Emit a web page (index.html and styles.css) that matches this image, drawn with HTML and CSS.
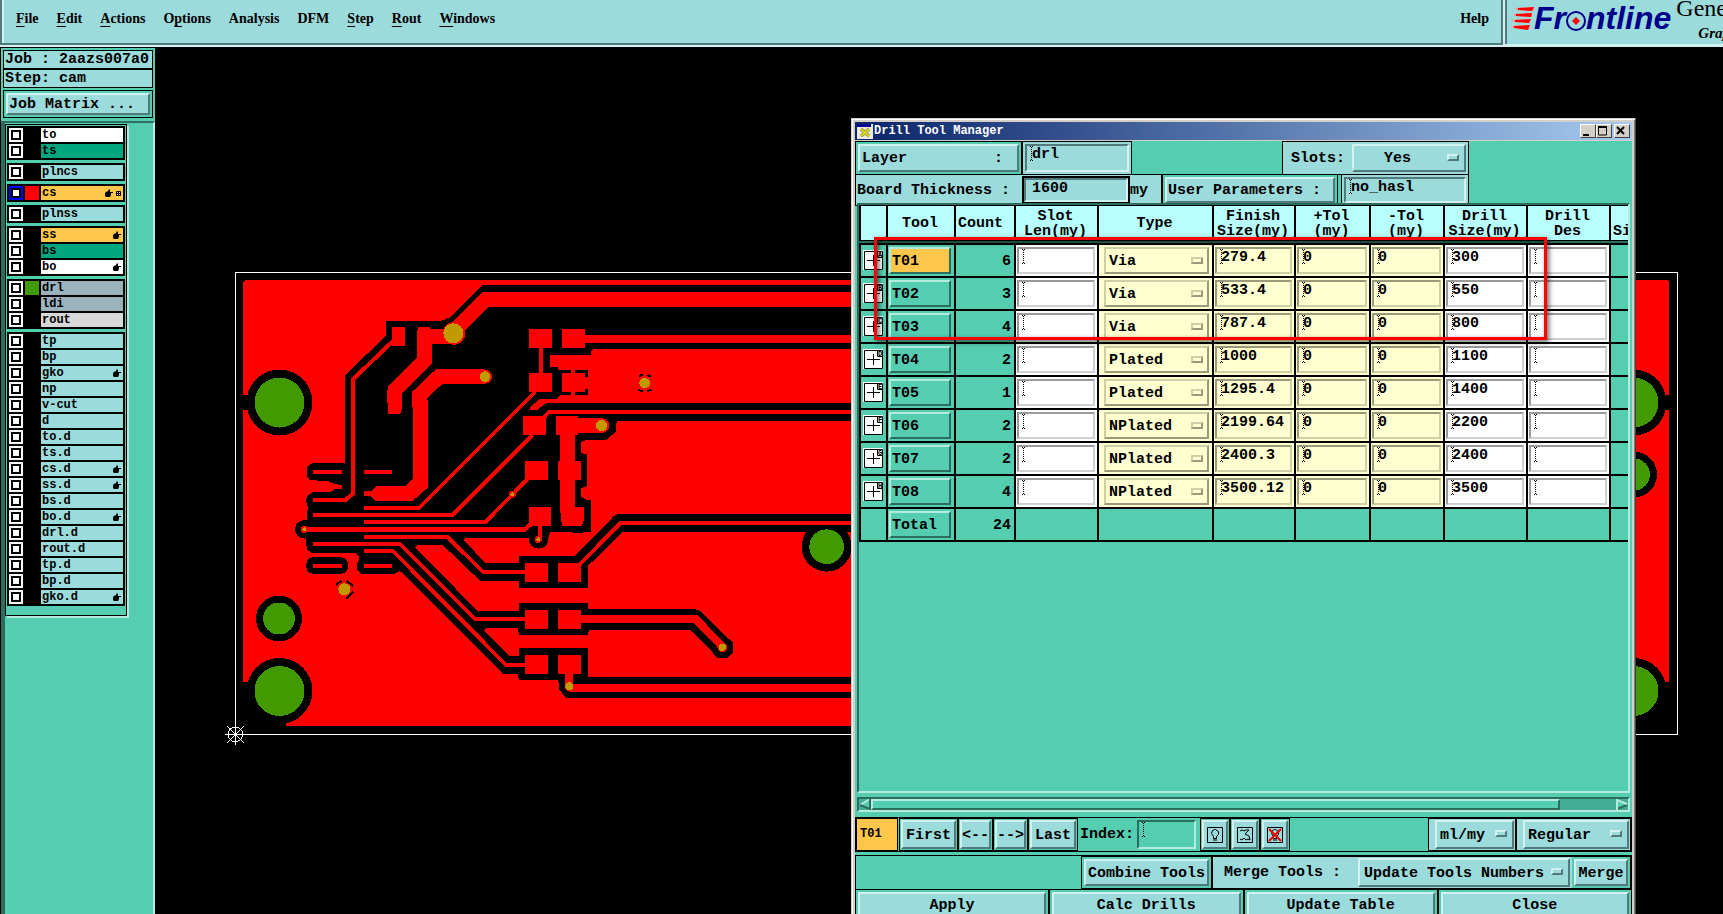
FILE: index.html
```html
<!DOCTYPE html>
<html lang="en">
<head>
<meta charset="utf-8">
<title>Drill Tool Manager</title>
<link rel="stylesheet" href="styles.css">
</head>
<body>
<header class="top">
  <nav class="menubar">
    <a href="#"><u>F</u>ile</a><a href="#"><u>E</u>dit</a><a href="#"><u>A</u>ctions</a><a href="#">O<u>p</u>tions</a><a href="#">Analysis</a><a href="#">DFM</a><a href="#"><u>S</u>tep</a><a href="#"><u>R</u>out</a><a href="#"><u>W</u>indows</a><a href="#" class="help">Help</a>
  </nav>
  <div class="brand">
    <svg class="streaks" width="24" height="24" viewBox="0 0 24 24"><g fill="#ff9a9a"><path d="M4 1 24 0V4L7 3zM2 7 22 6V10L5 9zM0 13 20 12V16L4 15zM0 19 19 18V22L3 21z"/></g><g fill="#f00"><path d="M8 1 24 0 22 4 8 3zM6 7 22 6 21 10 6 9zM5 13 21 12 19 16 5 15zM4 19 20 18 18 23 4 21z"/></g></svg>
    <span class="logo">Fr<svg width="20" height="20" viewBox="0 0 20 20"><circle cx="10" cy="10" r="9" fill="none" stroke="#00008b" stroke-width="2"/><path d="M10 6 14 10 10 14 6 10z" fill="#f00"/></svg>ntline</span>
    <span class="product"><span class="name">Gene</span><i>Grap</i></span>
  </div>
</header>
<main class="work">
  <aside class="side">
    <div class="job">
      <div class="info">Job : 2aazs007a0</div>
      <div class="info">Step: cam</div>
      <div class="cell matrix"><button class="btn">Job Matrix ...</button></div>
    </div>
    <div class="panel"><div class="layers" id="layers"></div></div>
  </aside>
  <section class="canvas">
    <svg class="board" width="1568" height="867" viewBox="155 47 1568 867" shape-rendering="crispEdges">
      <path fill="#f00" d="M245 280H1667L1669 282V682H1626V726H286V682H243V282z"/>
      <rect x="235.500" y="272.500" width="1442" height="462" fill="none" stroke="#fff"/>
      <path d="M243 395h10v15h-10zM1660 395h9v15h-9z"/>
      <g><circle cx="279.500" cy="402.500" r="33"/><circle cx="279" cy="618.500" r="23"/><circle cx="279.500" cy="691" r="33"/><circle cx="1633.500" cy="402.500" r="33"/><circle cx="1634" cy="474.500" r="23"/><circle cx="1633.500" cy="691" r="33"/></g>
      <g fill="#439a00"><circle cx="279.500" cy="402.500" r="25"/><circle cx="279" cy="618.500" r="16"/><circle cx="279.500" cy="691" r="25"/><circle cx="1633.500" cy="402.500" r="25"/><circle cx="1634" cy="474.500" r="16"/><circle cx="1633.500" cy="691" r="25"/></g>
      <g transform="translate(220 260) scale(.33333)">
        <path d="M1900 75H788L690 172 660 184H498V226L376 346V609H278L262 620 260 645 268 660 325 664 345 672 366 676V686L343 688 333 695 278 697 262 708 258 722 264 745 260 765 258 850 262 870 275 879H405L417 890V900L410 912 412 930 425 941H525L538 934 546 936 848 1241H893L897 1260H1012L1018 1268V1290L1038 1313H1900V1251H1104V1164H897V1188H867L792 1110 800 1103H893L897 1125H1104L1107 1110H1413L1478 1177 1480 1182 1493 1194H1524L1538 1180V1145L1525 1136 1440 1052 1427 1048H1104V1030H897V1053H773L585 862 592 855H668L780 962H897V983H1104V918L1208 815H1900V762H1195L1182 768 1065 888H897V909H797L730 840 738 834H985L990 816H1055L1060 819H1090V816H1113V720H1101L1084 712V685L1101 678V582L1084 580V546L1098 540H1160L1187 515 1190 483H1900V430H978L953 449H930V442L958 418 1012 416 1020 405H1104V330H1015V321H990V285H1113V273L1120 267H1900z"/>
        <circle cx="253" cy="808" r="28"/><circle cx="956" cy="836" r="30"/><circle cx="1820" cy="860" r="75"/>
        <rect x="259" y="892" width="125" height="49" rx="20"/>
        <g fill="#f00">
          <path d="M516 201h39v57h-39zM594 201H630V207H700V252H636V312L546 400V447L540 462H504L501 395 505 380 591 293V220zM927 207h69v57h-69zM1026 207h69v57h-69zM957 264h12v75h-12zM927 339h69v57h-69zM1026 339h69v57h-69zM1053 325h12v85h-12zM1090 351h20v36h-20zM909 468h69v57h-69zM1008 468H1074V474H1145V519H1074V525H1065V603H1084V660H1065V741H1092V780L1086 798H1026L1020 745V660H1014V603H1020V525H1008zM915 603h69v57h-69zM927 741h66v57h-66zM953 798h12v40h-12zM915 909h69v57h-69zM1014 909h69v57h-69zM915 1050h69v57h-69zM1014 1050h69v57h-69zM915 1185h69v57h-69zM1014 1185h69v57h-69zM1035 1242h24v37h-24z"/>
          <path d="M432 694H455L470 678H557L580 655V420H624V682L578 723H465L452 707H432z"/>
          <circle cx="702" cy="220" r="34"/><circle cx="795" cy="350" r="21"/><circle cx="1146" cy="497" r="22"/><circle cx="877" cy="703" r="11"/><circle cx="253" cy="808" r="11"/><circle cx="955" cy="838" r="11"/><circle cx="1507" cy="1162" r="15"/><circle cx="1048" cy="1280" r="14"/>
        </g>
        <g fill="none" stroke="#f00" stroke-width="12">
          <path stroke-width="45" d="M1900 118H797L700 215M795 350H657L599 405V440"/>
          <path stroke-width="24" d="M1095 237H1900M1083 1077H1427L1507 1160M1048 1284H1900"/>
          <path d="M520 242 400 357V700L375 721H280M278 636H366M432 636H516M432 744H597L945 396M278 765H698L938 525M432 787H795L922 658M432 831H683L788 935H915M278 852H540L765 1077H915M432 874H520L858 1215H915M278 917H366M432 917H516M1900 456H987L970 474M1078 914 1202 789H1900"/>
          <path stroke-width="14" d="M253 808H915L935 790"/>
        </g>
        <g fill="none" stroke="#000" stroke-width="6"><path d="M348 975 364 962M380 962 399 978M400 995 378 1016M1256 348 1268 345M1282 345 1294 350M1256 390 1268 394M1282 394 1294 389"/></g>
        <g fill="#c19a00"><circle cx="700" cy="220" r="30"/><circle cx="795" cy="350" r="16"/><circle cx="1145" cy="497" r="17"/><circle cx="877" cy="703" r="6"/><circle cx="253" cy="808" r="6"/><circle cx="955" cy="838" r="6"/><circle cx="1507" cy="1162" r="11"/><circle cx="1048" cy="1279" r="12"/><circle cx="373" cy="988" r="18"/><circle cx="1274" cy="369" r="16"/></g>
        <circle cx="1820" cy="860" r="52" fill="#439a00"/>
        <g fill="none" stroke="#fff" stroke-width="3"><circle cx="46" cy="1423" r="22"/><path d="M15 1423H77M46 1392V1455M22 1399 71 1448M71 1399 22 1448"/></g>
      </g>
    </svg>

    <div class="dialog" role="dialog" aria-label="Drill Tool Manager">
      <div class="title">
        <svg width="16" height="15" viewBox="0 0 16 15"><path fill="#ece9d8" d="M0 0h16v15H0z"/><path fill="#00008b" d="M0 0h14v3H0z"/><path d="M4 5 12 12M12 5 4 12" stroke="#777" stroke-width="3"/><path d="M4 5 12 12M12 5 4 12" stroke="#dcdc00" stroke-width="2"/></svg>
        <span>Drill Tool Manager</span>
        <button aria-label="Minimize"><svg width="12" height="10" viewBox="0 0 12 10"><path d="M2 8h6v2H2z"/></svg></button>
        <button aria-label="Maximize"><svg width="12" height="10" viewBox="0 0 12 10"><path d="M1.500 1h8v8h-8z" fill="none" stroke="#000"/><path d="M1 0h9v2H1z"/></svg></button>
        <button aria-label="Close window" class="x"><svg width="12" height="10" viewBox="0 0 12 10"><path d="M2 1 9 8M9 1 2 8" stroke="#000" stroke-width="2"/></svg></button>
      </div>
      <div class="content">
        <div class="row1">
          <div class="cell"><button class="btn split"><span>Layer</span><span>:</span></button></div>
          <div class="cell aqua"><input class="field beam" aria-label="Layer" value="drl"></div>
          <div></div>
          <div class="cell aqua slots"><label for="slots">Slots:</label><span class="menu"><select id="slots" class="btn yes"><option>Yes</option></select></span></div>
        </div>
        <div class="row2">
          <div class="cell aqua thick"><label for="bt">Board Thickness :</label><input id="bt" class="field focus" value="1600"><span>my</span></div>
          <div class="cell"><button class="btn params">User Parameters :</button></div>
          <div></div>
          <div class="cell aqua"><input class="field beam" aria-label="User Parameters" value="no_hasl"></div>
        </div>
        <div class="frame">
          <table>
            <colgroup><col class="c0"><col class="c1"><col class="c2"><col class="c3"><col class="c4"><col class="c5"><col class="c6"><col class="c7"><col class="c3"><col class="c3"><col></colgroup>
            <thead>
              <tr><th></th><th>Tool</th><th class="count">Count</th><th>Slot<br>Len(my)</th><th>Type</th><th>Finish<br>Size(my)</th><th>+Tol<br>(my)</th><th>-Tol<br>(my)</th><th>Drill<br>Size(my)</th><th>Drill<br>Des</th><th class="cut"><br>Si</th></tr>
              <tr class="gap"><td colspan="11"></td></tr>
            </thead>
            <tbody id="tools"></tbody>
          </table>
          <div class="mark"></div>
        </div>
        <div class="scroll">
          <button aria-label="Scroll left"><svg width="12" height="11" viewBox="0 0 12 11"><path d="M11 0 1 6 11 11z" fill="#55cdb0"/><path d="M11 0 1 6" stroke="#b5ebdd" stroke-width="2"/><path d="M1 6 11 10V0" fill="none" stroke="#2c6e5e" stroke-width="2"/></svg></button>
          <div class="thumb"></div>
          <button aria-label="Scroll right"><svg width="12" height="11" viewBox="0 0 12 11"><path d="M1 0 11 6 1 11z" fill="#55cdb0"/><path d="M11 6 1 10" stroke="#2c6e5e" stroke-width="2"/><path d="M1 11V1L11 5" fill="none" stroke="#b5ebdd" stroke-width="2"/></svg></button>
        </div>
        <div class="nav">
          <div class="current">T01</div>
          <div class="cell first"><button class="btn">First</button></div>
          <div class="cell arrow"><button class="btn">&lt;--</button></div>
          <div class="cell arrow"><button class="btn">--&gt;</button></div>
          <div class="cell last"><button class="btn">Last</button></div>
          <label for="index">Index:</label><input id="index" class="field beam index">
          <div class="cell ico"><button class="btn" aria-label="Highlight"><svg width="16" height="16" viewBox="0 0 16 16"><g fill="none" stroke="#000"><path d="M.5.5h15v15H.5z"/><path d="M6.500 11.500V9.500L4.500 6.500 5.500 3.500 7.500 2.500H8.500L11.500 4.500V7.500L9.500 9.500V11.500z"/><path d="M6 13h4"/></g></svg></button></div>
          <div class="cell ico"><button class="btn" aria-label="Select"><svg width="16" height="16" viewBox="0 0 16 16"><g fill="none" stroke="#000"><path d="M.5.5h15v15H.5z"/><path d="M3 4 5 3 7 4 9 3 12 3 8 7 12 9 13 13 11 12 9 13 7 11 5 13 3 12"/></g></svg></button></div>
          <div class="cell ico"><button class="btn" aria-label="Clear"><svg width="16" height="16" viewBox="0 0 16 16"><g fill="none" stroke="#000"><path d="M.5.5h15v15H.5z"/><path d="M6.500 11.500V9.500L4.500 6.500 5.500 3.500 7.500 2.500H8.500L11.500 4.500V7.500L9.500 9.500V11.500z"/><path d="M6 13h4"/></g><path d="M2 2 14 14M14 2 2 14" stroke="#e00" stroke-width="2"/></svg></button></div>
          <div class="space"></div>
          <div class="cell aqua units"><span class="menu"><select class="btn" aria-label="Units"><option>ml/my</option></select></span></div>
          <div class="cell aqua mode"><span class="menu"><select class="btn" aria-label="Mode"><option>Regular</option></select></span></div>
        </div>
        <div class="merge">
          <div class="space"></div>
          <div class="cell combine"><button class="btn">Combine Tools</button></div>
          <div class="cell aqua opts"><label for="upd">Merge Tools :</label><span class="menu"><select id="upd" class="btn"><option>Update Tools Numbers</option></select></span></div>
          <div class="cell go"><button class="btn">Merge</button></div>
        </div>
        <div class="actions">
          <div class="cell"><button class="btn">Apply</button></div>
          <div class="cell"><button class="btn">Calc Drills</button></div>
          <div class="cell"><button class="btn">Update Table</button></div>
          <div class="cell"><button class="btn">Close</button></div>
        </div>
      </div>
    </div>
  </section>
</main>
<script src="app.js"></script>
</body>
</html>
```
FILE: styles.css
```css
*, *::after { box-sizing: border-box; }
:root {
  --green: #55cdb0;
  --green-dark: #2c6e5e;
  --green-light: #b5ebdd;
  --aqua: #9bdbdb;
  --aqua-dark: #527a7c;
  --aqua-light: #d3f1f0;
  --orange: #ffc64c;
}
html, body { height: 100%; }
body {
  margin: 0;
  display: flex;
  flex-direction: column;
  overflow: hidden;
  background: #000;
  color: #000;
  font: bold 15px/17px "Liberation Mono", monospace;
}
button, input, select { font: inherit; color: inherit; margin: 0; padding: 0; border-radius: 0; }
svg { display: block; }

/* top bar */
.top { display: flex; flex: none; height: 47px; background: var(--aqua-light); overflow: hidden; }
.menubar {
  flex: 1;
  display: flex;
  gap: 18px;
  padding: 10px 12px 0 14px;
  height: 45px;
  background: var(--aqua);
  border: solid var(--aqua-dark);
  border-width: 0 2px 2px;
  box-shadow: inset 2px 0 var(--aqua-light);
  font: bold 14px/18px "Liberation Serif", serif;
}
.menubar a { color: #000; text-decoration: none; }
.menubar u { text-underline-offset: 3px; }
.help { margin-left: auto; }
.brand {
  flex: none;
  display: flex;
  width: 218px;
  height: 44px;
  margin-left: 2px;
  padding: 0 0 0 3px;
  background: var(--aqua);
  border-left: 2px solid var(--aqua-dark);
}
.streaks { flex: none; margin: 7px 0 0 0; }
.logo { display: flex; align-items: flex-start; flex: none; color: #00008b; font: italic bold 32px/36px "Liberation Sans", sans-serif; }
.logo svg { margin-top: 11px; }
.product { display: flex; flex-direction: column; margin-left: 5px; font-family: "Liberation Serif", serif; font-weight: normal; }
.name { font-size: 24px; line-height: 16px; }
.product i { margin: 9px 0 0 22px; font-size: 15px; line-height: 16px; font-weight: bold; }

.work { flex: 1; display: flex; min-height: 0; }

/* layer list */
.side { flex: none; width: 155px; display: flex; flex-direction: column; border-left: 1px solid #000; background: var(--green); }
.job { padding: 2px 2px 3px; border-top: 1px solid #000; }
.info { height: 19px; padding: 0 1px; background: var(--aqua); border: 1px solid #000; line-height: 17px; white-space: nowrap; }
.matrix { margin-top: 2px; height: 28px; }
.matrix .btn { text-align: left; padding: 0 1px; }
.panel { flex: 1; padding-top: 1px; border: solid; border-width: 2px 2px 0 4px; border-color: var(--green-dark) var(--green-light) transparent var(--green-dark); }
.layers {
  display: flex;
  flex-direction: column;
  gap: 3px;
  width: 122px;
  padding: 1px 1px 9px;
  border: 1px solid #000;
  box-shadow: 2px 2px var(--green-light);
  font-size: 12px;
  line-height: 14px;
}
.group { display: flex; flex-direction: column; gap: 2px; padding: 2px; background: #000; }
.layer { display: grid; grid-template-columns: 14px 14px 1fr; gap: 2px; height: 14px; }
.layer input { appearance: none; width: 14px; height: 14px; background: #fff; border: 2px solid #fff; box-shadow: inset 0 0 0 2px #000; }
.layer input.active { border-color: #00f; }
.layer label { display: flex; align-items: center; gap: 3px; padding: 0 2px 0 1px; background: var(--aqua); }
.layer label span { flex: 1; }
.swatch.red { background: #f00; }
.swatch.green { background: #439a00; }
.layer .white { background: #fff; }
.layer .mask { background: #00a67d; }
.layer .orange { background: var(--orange); }
.layer .slate { background: #9bb2bd; }
.layer .grey { background: #d8d8d8; }

/* board and dialog */
.canvas { flex: 1; position: relative; overflow: hidden; min-width: 0; }
.dialog {
  position: absolute;
  left: 696px;
  top: 71px;
  width: 785px;
  border: 1px solid;
  border-color: #d4d0c8 #404040 #404040 #d4d0c8;
  box-shadow: inset 1px 1px #fff, inset -1px -1px #808080;
  background: #d4d0c8;
  padding: 3px 3px 0;
}
.title { display: flex; align-items: center; height: 18px; padding: 0 2px; background: linear-gradient(90deg, #0a246a, #a6caf0); color: #fff; font-size: 12px; }
.title span { flex: 1; margin-left: 1px; }
.title button { width: 16px; height: 14px; border: 1px solid; border-color: #fff #404040 #404040 #fff; background: #d4d0c8; }
.title .x { margin-left: 2px; }
.content { margin-top: 1px; background: var(--green); }

.cell { display: flex; padding: 2px; border: 1px solid #000; background: var(--green); min-width: 0; }
.aqua { background: var(--aqua); }
.btn {
  flex: 1;
  display: block;
  width: 100%;
  padding-top: 1px;
  background: var(--aqua);
  border: 2px solid;
  border-color: var(--aqua-light) var(--aqua-dark) var(--aqua-dark) var(--aqua-light);
  white-space: nowrap;
  min-width: 0;
}
select.btn { appearance: none; height: 100%; padding-left: 4px; }
.menu { flex: 1; display: flex; position: relative; min-width: 0; }
.menu::after {
  content: "";
  position: absolute;
  right: 7px;
  top: 10px;
  width: 12px;
  height: 7px;
  border: 2px solid;
  border-color: var(--aqua-light) var(--aqua-dark) var(--aqua-dark) var(--aqua-light);
  pointer-events: none;
}
.field {
  flex: 1;
  min-width: 0;
  width: 100%;
  padding: 0 0 7px 5px;
  background-color: transparent;
  border: 2px solid;
  border-color: var(--aqua-dark) var(--aqua-light) var(--aqua-light) var(--aqua-dark);
  outline: none;
}
.beam {
  background-repeat: no-repeat;
  background-image:
    repeating-linear-gradient(#000 0 1px, transparent 1px 2px),
    repeating-linear-gradient(90deg, #000 0 1px, transparent 1px 2px),
    repeating-linear-gradient(90deg, #000 0 1px, transparent 1px 2px);
  background-size: 1px 13px, 3px 1px, 3px 1px;
  background-position: 4px 1px, 3px 0, 3px 14px;
}

.row1 { display: grid; grid-template-columns: 167px 110px 1fr 187px 163px; height: 33px; }
.split { display: flex; justify-content: space-between; padding: 4px 14px 0 2px; }
.slots { align-items: center; padding-left: 8px; }
.slots .menu { align-self: stretch; margin-left: 7px; }
.slots .yes { padding-left: 30px; }
.row2 { display: grid; grid-template-columns: 307px 176px 3px 128px 1fr; height: 29px; }
.row2 .field { padding-bottom: 5px; }
.row2 .params { text-align: left; padding-left: 1px; }
.thick { align-items: center; padding: 0 0 0 1px; }
.thick label { width: 167px; }
.thick .focus { flex: none; width: 104px; height: 24px; padding-bottom: 4px; padding-left: 6px; box-shadow: 0 0 0 2px #000; }
.thick span { margin-left: 2px; }

/* tool table */
.frame { position: relative; height: 590px; margin: 0 2px; border: 2px solid; border-color: var(--green-dark) var(--green-light) var(--green-light) var(--green-dark); }
table { width: 100%; table-layout: fixed; border-collapse: separate; border-spacing: 0; }
.c0 { width: 27px; }
.c1 { width: 68px; }
.c2 { width: 60px; }
.c3 { width: 83px; }
.c4 { width: 115px; }
.c5 { width: 82px; }
.c6 { width: 75px; }
.c7 { width: 74px; }
th { height: 36px; padding: 1px 2px 0 0; background: #b8ffff; border: solid #000; border-width: 1px 0 1px 2px; line-height: 15px; overflow: hidden; }
th.count { text-align: left; padding-left: 2px; }
th.cut { text-align: left; padding: 1px 0 0 2px; white-space: nowrap; }
td { height: 33px; padding: 2px 3px 2px 1px; border: solid #000; border-width: 2px 0 0 2px; vertical-align: middle; }
tbody tr:last-child td { height: 35px; border-bottom-width: 2px; }
.gap td { height: 2px; padding: 0; border: 0; background: var(--green-dark); }
td.num { text-align: right; padding-top: 3px; }
td.white, td.yellow { padding-right: 2px; }
td.white { background: #fff; }
td.yellow { background: #ffffcf; }
td .btn, td .field { height: 27px; }
td .btn { text-align: left; padding: 1px 1px 0; background: transparent; border-color: var(--green-light) var(--green-dark) var(--green-dark) var(--green-light); }
td .btn.on { background: var(--orange); }
td.type { padding-left: 5px; padding-right: 3px; }
td .menu .btn { border-color: #cfcfa6 #9a9a7a #9a9a7a #cfcfa6; padding-left: 3px; }
td .menu::after { border-color: #cfcfa6 #9a9a7a #9a9a7a #cfcfa6; right: 6px; }
td .field { display: block; padding-left: 4px; }
td.yellow .field { border-color: #9a9a7a #cfcfa6 #cfcfa6 #9a9a7a; }
td.white .field { border-color: #9a9a9a #cfcfcf #cfcfcf #9a9a9a; }
td.sym { padding: 0 0 1px 2px; }
.mark { position: absolute; left: 15px; top: 32px; width: 673px; height: 103px; border: 3px solid #f00; box-shadow: 2px 2px 5px rgba(0,0,0,.6), inset 2px 2px 5px rgba(0,0,0,.6); pointer-events: none; }

.scroll { display: flex; height: 15px; margin: 4px 2px 5px; background: #45ad93; border: 2px solid; border-color: var(--green-dark) var(--green-light) var(--green-light) var(--green-dark); }
.scroll button { width: 12px; border: 0; background: none; }
.thumb { flex: 1; margin-right: 56px; background: var(--green); border: 2px solid; border-color: var(--green-light) var(--green-dark) var(--green-dark) var(--green-light); }

.nav { display: flex; height: 35px; border: 1px solid #000; }
.nav .cell { padding: 1px; }
.current { width: 42px; margin-right: 1px; padding-left: 3px; background: var(--orange); border: 1px solid #000; font-size: 12px; line-height: 31px; }
.first { width: 59px; }
.arrow { width: 35px; }
.last { width: 50px; }
.nav label { margin-left: 2px; line-height: 33px; }
.nav .index { flex: none; width: 59px; height: 29px; margin: 2px 4px 2px 3px; border-color: var(--green-dark) var(--green-light) var(--green-light) var(--green-dark); }
.ico { width: 30px; }
.ico svg { margin: 0 auto; }
.space { flex: 1; }
.nav .units { width: 88px; padding-left: 6px; }
.nav .mode { width: 115px; padding-left: 6px; }
.nav .units .btn, .nav .mode .btn { padding-left: 3px; }
.merge { display: flex; height: 34px; margin-top: 3px; border: solid #000; border-width: 1px 1px 0; }
.merge .opts { align-items: center; width: 360px; padding: 1px 1px 1px 11px; border-right: 0; }
.merge .menu { align-self: stretch; margin: 0 1px 0 17px; }
.merge .go { width: 59px; border-left: 0; }
.merge .combine { width: 131px; }
.actions { display: grid; grid-template-columns: repeat(4, 1fr); }
.actions .cell { height: 31px; }
```
FILE: app.js
```js
const hand = '<svg width="8" height="8" viewBox="0 0 8 8"><path d="M0 4 1 3 3 2 4 0 5 1V3H8V4H6V6L5 8H1L0 7z"/></svg>';
const grid = '<svg width="5" height="5" viewBox="0 0 5 5"><path d="M.5.5h4v4h-4zM2.500 0v5M0 2.500h5" fill="none" stroke="#000"/></svg>';
const groups = [
  [['to', 'white'], ['ts', 'mask']],
  [['plncs', '']],
  [['cs', 'orange', 'hg', 'red']],
  [['plnss', '']],
  [['ss', 'orange', 'h'], ['bs', 'mask'], ['bo', 'white', 'h']],
  [['drl', 'slate', '', 'green'], ['ldi', 'slate'], ['rout', 'grey']],
  [['tp'], ['bp'], ['gko', '', 'h'], ['np'], ['v-cut'], ['d'], ['to.d'], ['ts.d'], ['cs.d', '', 'h'], ['ss.d', '', 'h'], ['bs.d'], ['bo.d', '', 'h'], ['drl.d'], ['rout.d'], ['tp.d'], ['bp.d'], ['gko.d', '', 'h']]
];
document.getElementById('layers').innerHTML = groups.map(g => '<div class="group">' + g.map(([n, c = '', f = '', s = '']) =>
  `<div class="layer"><input type="checkbox" id="l-${n}" class="${n === 'cs' ? 'active' : ''}"><i class="swatch ${s}"></i><label for="l-${n}" class="${c}"><span>${n}</span>${f.includes('h') ? hand : ''}${f.includes('g') ? grid : ''}</label></div>`).join('') + '</div>').join('');

const tools = [
  ['T01', 6, 'Via', '279.4', '300'], ['T02', 3, 'Via', '533.4', '550'], ['T03', 4, 'Via', '787.4', '800'],
  ['T04', 2, 'Plated', '1000', '1100'], ['T05', 1, 'Plated', '1295.4', '1400'], ['T06', 2, 'NPlated', '2199.64', '2200'],
  ['T07', 2, 'NPlated', '2400.3', '2400'], ['T08', 4, 'NPlated', '3500.12', '3500']
];
const field = (cls, label, v) => `<td class="${cls}"><input class="field beam" aria-label="${label}" value="${v}"></td>`;
document.getElementById('tools').innerHTML = tools.map(([t, n, type, fin, drill], i) => `<tr>
  <td class="sym"><svg width="20" height="20" viewBox="0 0 20 20"><path fill="#fff" d="M0 0h20v20H0z"/><path d="M1.500 1.500h18v18h-18zM4 10.500h13M10.500 5v11M14.500 1v6.500H20" fill="none" stroke="#000"/><text x="15" y="7" font-size="7">${'ABCDEFGH'[i]}</text></svg></td>
  <td><button class="btn ${i ? '' : 'on'}">${t}</button></td><td class="num">${n}</td>
  ${field('white', t + ' slot length', '')}
  <td class="yellow type"><span class="menu"><select class="btn" aria-label="${t} type"><option>${type}</option></select></span></td>
  ${field('yellow', t + ' finish size', fin)}${field('yellow', t + ' plus tolerance', '0')}${field('yellow', t + ' minus tolerance', '0')}
  ${field('white', t + ' drill size', drill)}${field('white', t + ' drill designator', '')}<td></td></tr>`).join('') +
  '<tr><td></td><td><button class="btn">Total</button></td><td class="num">24</td>' + '<td></td>'.repeat(8) + '</tr>';
```
